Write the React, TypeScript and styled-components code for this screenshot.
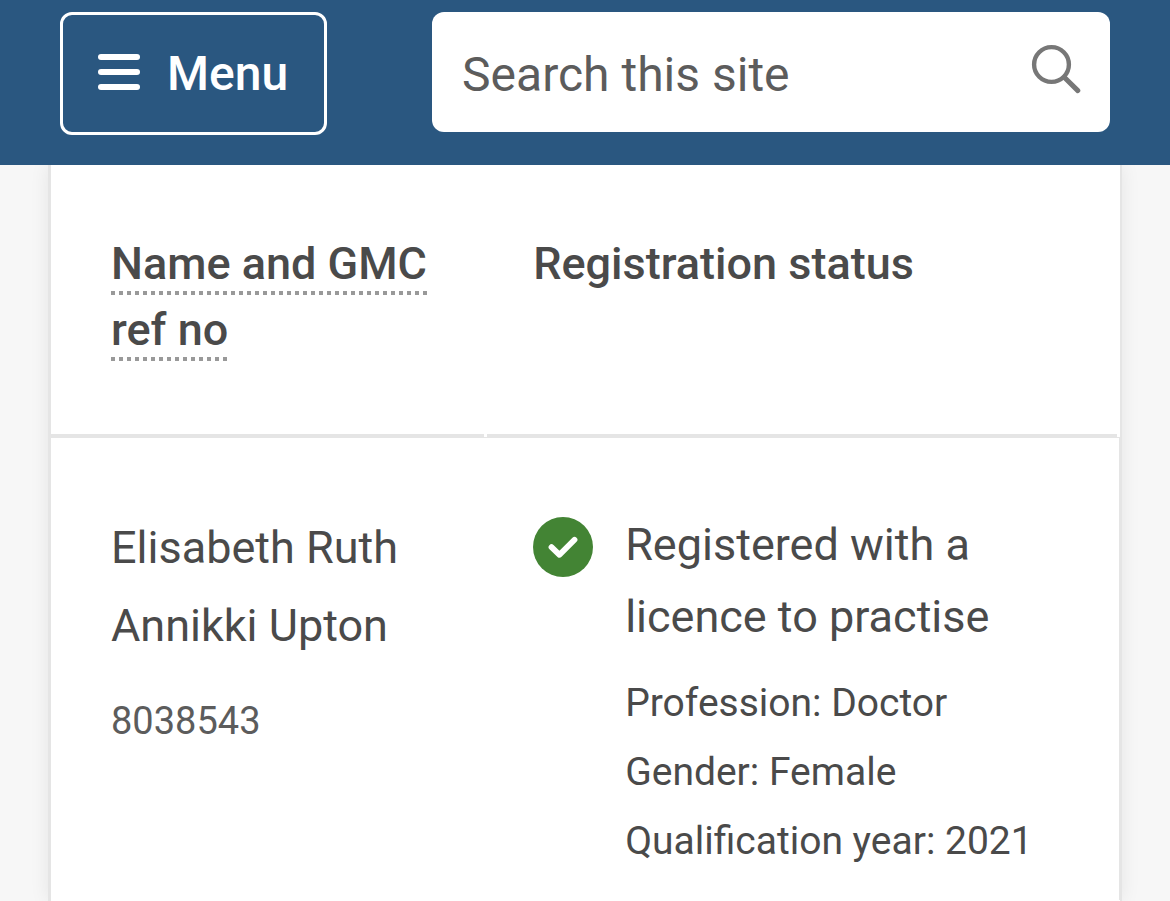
import React from "react";
import styled, { createGlobalStyle } from "styled-components";

const GlobalStyle = createGlobalStyle`
  *, *::before, *::after { box-sizing: border-box; }
  body {
    margin: 0;
    background: #f7f7f7;
    color: #4a4a4a;
    font-family: Roboto, "Liberation Sans", sans-serif;
  }
`;

const Page = styled.div`
  display: flex;
  flex-direction: column;
  min-height: 100vh;
`;

const Header = styled.header`
  position: relative;
  display: flex;
  align-items: flex-start;
  gap: 105px;
  padding: 12px 60px 30px;
  background: #2a5780;
`;

const MenuButton = styled.button`
  display: flex;
  align-items: center;
  gap: 27px;
  height: 123px;
  padding: 0 36px 0 35px;
  border: 3px solid #fff;
  border-radius: 12px;
  background: transparent;
  color: #fff;
  font: 500 48px/60px Roboto, "Liberation Sans", sans-serif;
`;

const MenuIcon = styled.svg`
  margin-bottom: 4px;
`;

const SearchForm = styled.form`
  display: flex;
  align-items: center;
  flex: 1;
  min-width: 0;
  height: 120px;
  padding: 0 29px 0 30px;
  border-radius: 12px;
  background: #fff;
`;

const SearchInput = styled.input`
  flex: 1;
  min-width: 0;
  height: 100%;
  padding: 4px 0 0;
  border: 0;
  outline: 0;
  background: transparent;
  color: #4a4a4a;
  font: 400 48px/60px Roboto, "Liberation Sans", sans-serif;

  &::placeholder {
    color: #5c5c5c;
    opacity: 1;
  }
`;

const SearchButton = styled.button`
  display: flex;
  padding: 0 0 6px;
  border: 0;
  background: transparent;
  color: #777;
`;

const Card = styled.main`
  flex: 1;
  margin: 0 48px;
  border: solid #e5e5e5;
  border-width: 0 2px 0 3px;
  background: #fff;
  box-shadow: 0 0 18px rgba(0, 0, 0, 0.08);
`;

const Results = styled.table`
  width: 100%;
  border-spacing: 0;
  table-layout: fixed;
`;

const HeadCell = styled.th<{ $width?: string; $inset: string }>`
  width: ${(p) => p.$width ?? "auto"};
  padding: 66px 48px 74px ${(p) => p.$inset};
  border-bottom: 1px solid #e5e5e5;
  background: linear-gradient(#e5e5e5, #e5e5e5) left bottom / calc(100% - 3px) 3px no-repeat;
  background-origin: padding-box;
  font-size: 45px;
  font-weight: 500;
  line-height: 66px;
  text-align: left;
  vertical-align: top;
`;

const Term = styled.span`
  padding-bottom: 5px;
  background: repeating-linear-gradient(to right, #999 0 4px, transparent 4px 8px) left bottom / 100% 4px no-repeat;
  -webkit-box-decoration-break: clone;
  box-decoration-break: clone;
`;

const Cell = styled.td<{ $inset: string }>`
  padding: 71px 48px 24px ${(p) => p.$inset};
  vertical-align: top;

  &:last-child {
    border-right: 1px solid #e5e5e5;
  }
`;

const DoctorName = styled.div`
  font-size: 45px;
  line-height: 78px;
`;

const Reference = styled.div`
  margin-top: 22px;
  color: #5c5c5c;
  font-size: 38px;
  line-height: 69px;
`;

const StatusBlock = styled.div`
  display: flex;
  align-items: flex-start;
  gap: 32px;
`;

const StatusIcon = styled.svg`
  flex: none;
  margin-top: 8px;
`;

const StatusTitle = styled.div`
  margin-bottom: 16px;
  font-size: 45px;
  line-height: 72px;
`;

const Detail = styled.div`
  font-size: 39px;
  line-height: 69px;
`;

const details = ["Profession: Doctor", "Gender: Female", "Qualification year: 2021"];

export default function App() {
  return (
    <Page>
      <GlobalStyle />
      <Header>
        <MenuButton type="button">
          <MenuIcon width="42" height="36" viewBox="0 0 42 36" fill="#fff" aria-hidden="true">
            <rect width="42" height="6" rx="3" />
            <rect y="15" width="42" height="6" rx="3" />
            <rect y="30" width="42" height="6" rx="3" />
          </MenuIcon>
          Menu
        </MenuButton>
        <SearchForm role="search" onSubmit={(e) => e.preventDefault()}>
          <SearchInput type="text" aria-label="Search this site" placeholder="Search this site" />
          <SearchButton type="submit" aria-label="Search">
            <svg width="50" height="50" viewBox="0 0 50 50" fill="none" stroke="currentColor" strokeLinecap="round" aria-hidden="true">
              <circle cx="20.5" cy="20.5" r="17.4" strokeWidth="4.4" />
              <path d="M33.5 33.5 46.8 46.6" strokeWidth="5" />
            </svg>
          </SearchButton>
        </SearchForm>
      </Header>
      <Card>
        <Results>
          <thead>
            <tr>
              <HeadCell scope="col" $width="40.8%" $inset="60px">
                <Term>Name and GMC ref no</Term>
              </HeadCell>
              <HeadCell scope="col" $inset="46px">Registration status</HeadCell>
            </tr>
          </thead>
          <tbody>
            <tr>
              <Cell $inset="60px">
                <DoctorName>Elisabeth Ruth Annikki Upton</DoctorName>
                <Reference>8038543</Reference>
              </Cell>
              <Cell $inset="46px">
                <StatusBlock>
                  <StatusIcon width="60" height="60" viewBox="0 0 60 60" aria-hidden="true">
                    <circle cx="30" cy="30" r="30" fill="#438434" />
                    <path d="M18.5 30.2 26.5 37.8 41.5 22.8" fill="none" stroke="#fff" strokeWidth="5.8" strokeLinecap="round" strokeLinejoin="round" />
                  </StatusIcon>
                  <div>
                    <StatusTitle>Registered with a licence to practise</StatusTitle>
                    {details.map((text) => (
                      <Detail key={text}>{text}</Detail>
                    ))}
                  </div>
                </StatusBlock>
              </Cell>
            </tr>
          </tbody>
        </Results>
      </Card>
    </Page>
  );
}
